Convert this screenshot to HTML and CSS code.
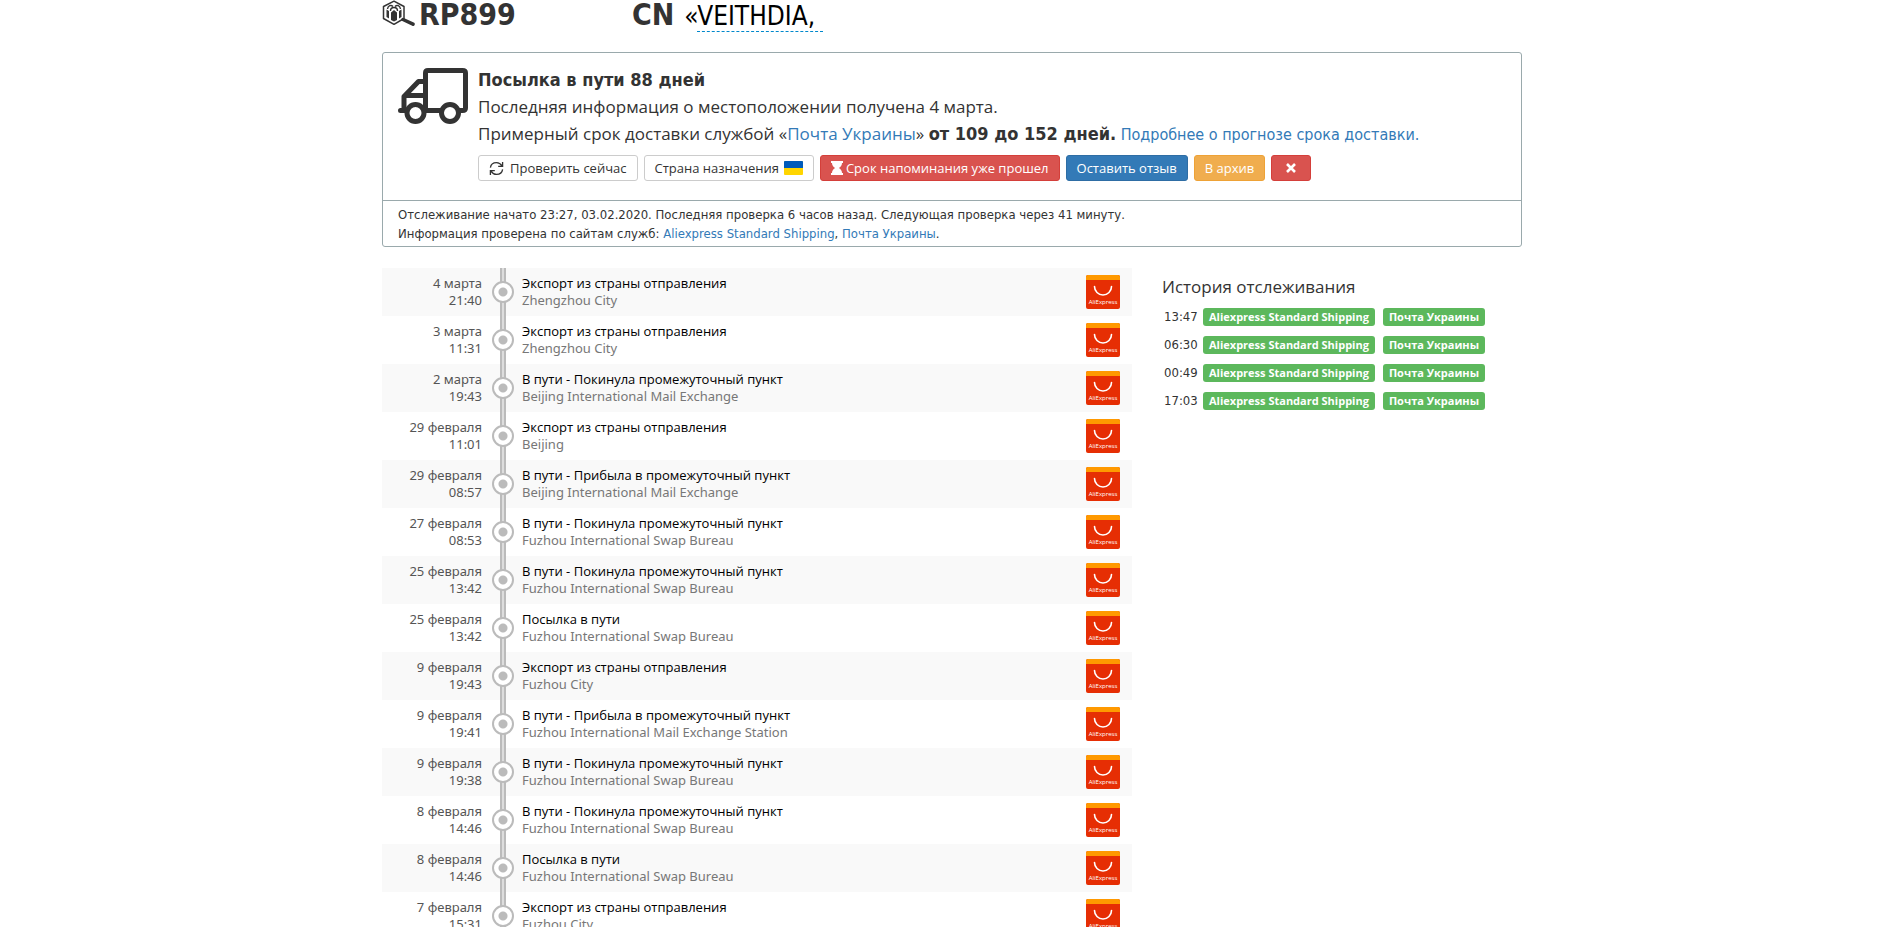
FILE: index.html
```html
<!DOCTYPE html>
<html lang="ru">
<head>
<meta charset="utf-8">
<title>RP899 CN</title>
<link rel="stylesheet" href="styles.css">
</head>
<body>
<svg class="defs" aria-hidden="true">
  <symbol id="ali" viewBox="0 0 34 34">
    <rect width="34" height="34" rx="2" fill="#e62e04"/>
    <path d="M0 5V2a2 2 0 0 1 2-2h30a2 2 0 0 1 2 2v3z" fill="#ff9900"/>
    <path d="M8.500 11.500a8.500 8.500 0 0 0 17 0" fill="none" stroke="#fff" stroke-width="1.600" stroke-linecap="round"/>
    <text x="17" y="28.500" text-anchor="middle" class="ali-text">AliExpress</text>
  </symbol>
</svg>
<main class="container">
  <h1 class="title">
    <svg class="title-icon" viewBox="0 0 33 26" aria-hidden="true">
      <path d="M12 1.200 22 6.500V18.500L12 24.300 1.500 18.500V6.500z" fill="none" stroke="#333" stroke-width="1.500" stroke-linejoin="round"/>
      <path d="M9 12.500 12 10l3 2.500v7.500L12 21.500 9 20z" fill="#333"/>
      <path d="M4.500 9.500v7.500l2.500 1.500v-7.500zM17 11v7.500l2.500-1.500V9.500z" fill="#333"/>
      <path d="M5.500 9C6 5.500 9 4.500 11 6.500M18.500 9C18 5.500 15 4.500 13 6.500M8.500 11c0-2.500 2-3.500 3.500-3.500s3.500 1 3.500 3.500" fill="none" stroke="#333" stroke-width="1.400"/>
      <path d="M21 19.500l10 4.700" stroke="#333" stroke-width="3.500" stroke-linecap="round"/>
    </svg>
    <span class="code">RP899</span><span class="country">CN</span>
    <span class="name">«<a href="#" class="editable">VEITHDIA, </a></span>
  </h1>

  <section class="status">
    <div class="status-main">
      <svg class="truck" viewBox="0 0 70 56" fill="none" stroke="#333" stroke-width="5" stroke-linejoin="round" stroke-linecap="round" aria-hidden="true">
        <path d="M27.500 42.500V5q0-2.500 2.500-2.500h34.500q3 0 3 2.500v35q0 2.500-3 2.500h-3M42 42.500H27M27.500 13.500h-7L6 28.500v13M2.500 42.500H8M8 27.500h19"/>
        <circle cx="17.500" cy="45" r="8.500"/>
        <circle cx="52" cy="45" r="8.500"/>
      </svg>
      <div class="status-body">
        <p class="line strong">Посылка в пути 88 дней</p>
        <p class="line">Последняя информация о местоположении получена 4 марта.</p>
        <p class="line">Примерный срок доставки службой «<a href="#">Почта Украины</a>» <b>от 109 до 152 дней.</b> <a href="#" class="more">Подробнее о прогнозе срока доставки.</a></p>
        <div class="buttons">
          <button class="btn" type="button"><svg class="ico" viewBox="0 0 16 16" fill="none" stroke="#333" stroke-width="1.400" aria-hidden="true"><path d="M1.500 7C2 3.500 5 1.700 8 1.700c2.500 0 4.500 1.300 5.800 3.500M14.500 1v4.700H9.800M14.500 9c-.500 3.500-3.500 5.300-6.500 5.300-2.500 0-4.500-1.300-5.800-3.500M1.500 15v-4.700h4.700"/></svg>Проверить сейчас</button>
          <button class="btn" type="button">Страна назначения<svg class="flag" viewBox="0 0 19 14" aria-hidden="true"><rect width="19" height="14" rx="1" fill="#ffd500"/><path d="M0 7V1a1 1 0 0 1 1-1h17a1 1 0 0 1 1 1v6z" fill="#005bbb"/></svg></button>
          <button class="btn danger" type="button"><svg class="glass" viewBox="0 0 12 14" fill="#fff" aria-hidden="true"><path d="M0 0h12v2h-1c0 2.500-1.500 4-3.200 5 1.700 1 3.200 2.500 3.200 5h1v2H0v-2h1c0-2.500 1.500-4 3.200-5C2.500 6 1 4.500 1 2H0z"/></svg>Срок напоминания уже прошел</button>
          <button class="btn primary" type="button">Оставить отзыв</button>
          <button class="btn warning" type="button">В архив</button>
          <button class="btn danger close" type="button" aria-label="Удалить"><svg class="cross" viewBox="0 0 10 10" stroke="#fff" stroke-width="2.600" aria-hidden="true"><path d="M1 1l8 8M9 1L1 9"/></svg></button>
        </div>
      </div>
    </div>
    <div class="status-foot">
      <p>Отслеживание начато 23:27, 03.02.2020. Последняя проверка 6 часов назад. Следующая проверка через 41 минуту.</p>
      <p>Информация проверена по сайтам служб: <a href="#">Aliexpress Standard Shipping</a>, <a href="#">Почта Украины</a>.</p>
    </div>
  </section>

  <div class="columns">
    <ol class="events">
      <li class="event"><div class="when">4 марта<br>21:40</div><div class="track"><i class="dot"></i></div><div class="what">Экспорт из страны отправления<span class="place">Zhengzhou City</span></div><svg class="ali"><use href="#ali"/></svg></li>
      <li class="event"><div class="when">3 марта<br>11:31</div><div class="track"><i class="dot"></i></div><div class="what">Экспорт из страны отправления<span class="place">Zhengzhou City</span></div><svg class="ali"><use href="#ali"/></svg></li>
      <li class="event"><div class="when">2 марта<br>19:43</div><div class="track"><i class="dot"></i></div><div class="what">В пути - Покинула промежуточный пункт<span class="place">Beijing International Mail Exchange</span></div><svg class="ali"><use href="#ali"/></svg></li>
      <li class="event"><div class="when">29 февраля<br>11:01</div><div class="track"><i class="dot"></i></div><div class="what">Экспорт из страны отправления<span class="place">Beijing</span></div><svg class="ali"><use href="#ali"/></svg></li>
      <li class="event"><div class="when">29 февраля<br>08:57</div><div class="track"><i class="dot"></i></div><div class="what">В пути - Прибыла в промежуточный пункт<span class="place">Beijing International Mail Exchange</span></div><svg class="ali"><use href="#ali"/></svg></li>
      <li class="event"><div class="when">27 февраля<br>08:53</div><div class="track"><i class="dot"></i></div><div class="what">В пути - Покинула промежуточный пункт<span class="place">Fuzhou International Swap Bureau</span></div><svg class="ali"><use href="#ali"/></svg></li>
      <li class="event"><div class="when">25 февраля<br>13:42</div><div class="track"><i class="dot"></i></div><div class="what">В пути - Покинула промежуточный пункт<span class="place">Fuzhou International Swap Bureau</span></div><svg class="ali"><use href="#ali"/></svg></li>
      <li class="event"><div class="when">25 февраля<br>13:42</div><div class="track"><i class="dot"></i></div><div class="what">Посылка в пути<span class="place">Fuzhou International Swap Bureau</span></div><svg class="ali"><use href="#ali"/></svg></li>
      <li class="event"><div class="when">9 февраля<br>19:43</div><div class="track"><i class="dot"></i></div><div class="what">Экспорт из страны отправления<span class="place">Fuzhou City</span></div><svg class="ali"><use href="#ali"/></svg></li>
      <li class="event"><div class="when">9 февраля<br>19:41</div><div class="track"><i class="dot"></i></div><div class="what">В пути - Прибыла в промежуточный пункт<span class="place">Fuzhou International Mail Exchange Station</span></div><svg class="ali"><use href="#ali"/></svg></li>
      <li class="event"><div class="when">9 февраля<br>19:38</div><div class="track"><i class="dot"></i></div><div class="what">В пути - Покинула промежуточный пункт<span class="place">Fuzhou International Swap Bureau</span></div><svg class="ali"><use href="#ali"/></svg></li>
      <li class="event"><div class="when">8 февраля<br>14:46</div><div class="track"><i class="dot"></i></div><div class="what">В пути - Покинула промежуточный пункт<span class="place">Fuzhou International Swap Bureau</span></div><svg class="ali"><use href="#ali"/></svg></li>
      <li class="event"><div class="when">8 февраля<br>14:46</div><div class="track"><i class="dot"></i></div><div class="what">Посылка в пути<span class="place">Fuzhou International Swap Bureau</span></div><svg class="ali"><use href="#ali"/></svg></li>
      <li class="event"><div class="when">7 февраля<br>15:31</div><div class="track"><i class="dot"></i></div><div class="what">Экспорт из страны отправления<span class="place">Fuzhou City</span></div><svg class="ali"><use href="#ali"/></svg></li>
    </ol>
    <aside class="history">
      <h2>История отслеживания</h2>
      <ul>
        <li><time>13:47</time><span class="label">Aliexpress Standard Shipping</span><span class="label">Почта Украины</span></li>
        <li><time>06:30</time><span class="label">Aliexpress Standard Shipping</span><span class="label">Почта Украины</span></li>
        <li><time>00:49</time><span class="label">Aliexpress Standard Shipping</span><span class="label">Почта Украины</span></li>
        <li><time>17:03</time><span class="label">Aliexpress Standard Shipping</span><span class="label">Почта Украины</span></li>
      </ul>
    </aside>
  </div>
</main>
</body>
</html>
```
FILE: styles.css
```css
* { box-sizing: border-box; }
html { scrollbar-width: none; }
body {
  margin: 0;
  padding-left: 8px;
  background: #fff;
  color: #333;
  font-family: "Open Sans", "Noto Sans", sans-serif;
  font-size: 13px;
  line-height: 17px;
}
a { color: #337ab7; text-decoration: none; }
p, h1, h2, ol, ul { margin: 0; padding: 0; }
ol, ul { list-style: none; }
.defs { position: absolute; width: 0; height: 0; }
.ali-text { font: 6px "Open Sans", sans-serif; fill: #fff; }
.container { max-width: 1140px; margin: 0 auto; }

.title {
  display: flex;
  align-items: baseline;
  height: 52px;
  font: bold 30px/30px "DejaVu Sans Condensed", sans-serif;
}
.title-icon { width: 33px; height: 26px; margin-right: 4px; align-self: flex-start; }
.country { margin: 0 10px 0 116px; }
.name { font: 26px/30px "DejaVu Sans Condensed", sans-serif; color: #000; white-space: pre; }
.editable { color: #000; border-bottom: 1px dashed #08c; }

.status { border: 1px solid #9aa9ac; border-radius: 3px; }
.status-main { display: flex; gap: 10px; padding: 15px 15px 19px; }
.truck { flex: none; width: 70px; height: 56px; }
.status-body { flex: 1; margin-top: -2px; }
.line { font-size: 17px; line-height: 27px; }
.line b, .strong { font: bold 18px/27px "DejaVu Sans Condensed", sans-serif; }
.more { font: 16px/27px "DejaVu Sans Condensed", sans-serif; }
.buttons { display: flex; flex-wrap: wrap; gap: 6px; margin-top: 7px; }
.btn {
  display: flex;
  align-items: center;
  height: 26px;
  padding: 0 10px;
  border: 1px solid #ccc;
  border-radius: 3px;
  background: #fff;
  color: #333;
  font: 13px/20px "Open Sans", "Noto Sans", sans-serif;
}
.btn.danger { background: #d9534f; border-color: #d43f3a; color: #fff; }
.btn.primary { background: #337ab7; border-color: #2e6da4; color: #fff; }
.btn.warning { background: #f0ad4e; border-color: #eea236; color: #fff; }
.btn.close { padding: 0 14px; }
.ico { width: 15px; height: 15px; margin-right: 6px; }
.flag { width: 19px; height: 14px; margin-left: 5px; }
.glass { width: 12px; height: 14px; margin-right: 3px; }
.cross { width: 10px; height: 10px; }
.status-foot {
  padding: 4px 15px 3px;
  border-top: 1px solid #9aa9ac;
  font: 13px/19px "DejaVu Sans Condensed", sans-serif;
}

.columns { display: flex; gap: 30px; margin-top: 21px; }
.events { flex: 0 1 750px; }
.event {
  display: grid;
  grid-template-columns: 102px 38px 1fr 34px;
  align-items: center;
  height: 48px;
  padding-right: 12px;
}
.event:nth-child(odd) { background: #f9f9f9; }
.when { padding-right: 2px; text-align: right; color: #555; font-family: "Noto Sans", sans-serif; }
.track {
  display: flex;
  align-items: center;
  justify-content: center;
  height: 48px;
  background: linear-gradient(90deg, #bbb 2px, #ddd 2px, #ddd 4px, #bbb 4px) center / 6px 100% no-repeat;
}
.dot {
  width: 22px;
  height: 22px;
  border: 2px solid #bbb;
  border-radius: 50%;
  background: radial-gradient(circle, #bbb 4px, #fff 5px);
}
.what { color: #000; }
.place { display: block; color: #777; font-family: "Noto Sans", sans-serif; }
.ali { width: 34px; height: 34px; }

.history { flex: 1; padding-top: 7px; }
.history h2 { font-size: 17px; font-weight: normal; line-height: 24px; }
.history ul { margin-top: 9px; }
.history li { display: flex; align-items: center; height: 18px; margin-bottom: 10px; }
.history time { width: 41px; padding-left: 2px; font: 13px/18px "DejaVu Sans Condensed", sans-serif; }
.label {
  margin-right: 8px;
  padding: 0 6px;
  border-radius: 3px;
  background: #5cb85c;
  color: #fff;
  font-size: 11px;
  font-weight: bold;
  line-height: 18px;
  white-space: nowrap;
}
```
